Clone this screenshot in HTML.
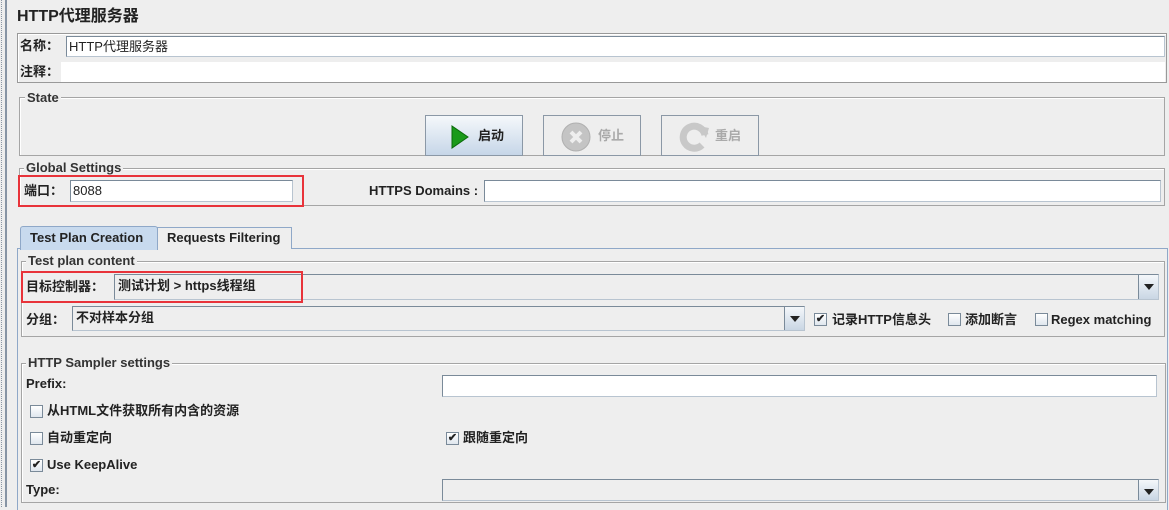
<!DOCTYPE html>
<html><head><meta charset="utf-8"><style>
*{box-sizing:border-box;margin:0;padding:0}
body{width:1169px;height:507px;background:#eeeeee;position:relative;overflow:hidden;font-family:"Liberation Sans","Noto Sans CJK SC",sans-serif;font-size:13px;color:#222;font-weight:bold}
.a{position:absolute}
.in{position:absolute;background:#fff;border:1px solid #7a8a99;border-right-color:#b8c4d0;border-bottom-color:#b8c4d0}
.fs{position:absolute;border:1px solid #a5a5a5;box-shadow:1px 1px 0 #fff inset}
.lg{position:absolute;background:#eeeeee;padding:0 2px;line-height:14px;font-size:13px;color:#333}
.t{position:absolute;line-height:16px;white-space:nowrap}
.btn{position:absolute;height:41px;border:1px solid #8b98a6;background:#eee}
.cb{position:absolute;width:13px;height:13px;border:1px solid #7a8a99;background:linear-gradient(#fff,#dfe6ee);font-size:11px;line-height:11px;text-align:center;color:#222}
.arr{position:absolute;width:20px;border-left:1px solid #7a8a99;background:linear-gradient(#f4f7fa,#c9d6e4)}
.arr:after{content:"";position:absolute;left:5px;top:9px;border-left:5px solid transparent;border-right:5px solid transparent;border-top:6px solid #222}
</style></head><body>
<div class="a" style="left:1px;top:0;width:1px;height:507px;border-left:1px dotted #8a96a4"></div>
<div class="a" style="left:5px;top:0;width:2px;height:507px;background:#8794a4"></div>

<div class="t" style="left:17px;top:7px;font-size:16px;line-height:20px">HTTP代理服务器</div>
<div class="fs" style="left:17px;top:33px;width:1150px;height:50px;border-color:#999"></div>
<div class="t" style="left:20px;top:38px">名称：</div>
<div class="in" style="left:66px;top:36px;width:1099px;height:21px;font-weight:normal;padding-left:2px;line-height:19px">HTTP代理服务器</div>
<div class="t" style="left:20px;top:64px">注释：</div>
<div class="a" style="left:61px;top:62px;width:1104px;height:20px;background:#fff"></div>

<div class="fs" style="left:19px;top:97px;width:1146px;height:59px"></div>
<div class="lg" style="left:25px;top:91px">State</div>
<div class="btn" style="left:425px;top:115px;width:98px;background:linear-gradient(#f5f8fb,#c6d6e8)">
<svg class="a" style="left:25px;top:9px" width="18" height="24"><path d="M1 1L17 12L1 23Z" fill="#1a9a1a" stroke="#0a6a0a"/></svg>
<div class="t" style="left:52px;top:12px">启动</div></div>
<div class="btn" style="left:543px;top:115px;width:98px">
<svg class="a" style="left:17px;top:6px" width="30" height="30"><circle cx="15" cy="15" r="14" fill="#c4c4c4" stroke="#b0b0b0"/><path d="M10 10L20 20M20 10L10 20" stroke="#eee" stroke-width="4"/></svg>
<div class="t" style="left:54px;top:12px;color:#aaa">停止</div></div>
<div class="btn" style="left:661px;top:115px;width:98px">
<svg class="a" style="left:17px;top:6px" width="30" height="30"><path d="M26 13A11 11 0 1 0 23 23" fill="none" stroke="#c8c8c8" stroke-width="7"/><path d="M20 4L30 6L27 16Z" fill="#c8c8c8"/></svg>
<div class="t" style="left:53px;top:12px;color:#aaa">重启</div></div>

<div class="fs" style="left:19px;top:168px;width:1146px;height:38px"></div>
<div class="lg" style="left:24px;top:161px">Global Settings</div>
<div class="t" style="left:24px;top:183px">端口：</div>
<div class="in" style="left:70px;top:180px;width:223px;height:22px;font-weight:normal;padding-left:2px;line-height:20px">8088</div>
<div class="a" style="left:18px;top:175px;width:286px;height:32px;border:2px solid #e8333a"></div>
<div class="t" style="left:369px;top:183px">HTTPS Domains :</div>
<div class="in" style="left:484px;top:180px;width:677px;height:22px"></div>

<div class="a" style="left:17px;top:248px;width:1151px;height:262px;border:1px solid #8fa8c8;border-bottom:none"></div>
<div class="a" style="left:20px;top:226px;width:138px;height:24px;background:#c8daee;border:1px solid #8fa8c8;border-bottom:none;border-radius:3px 3px 0 0"></div>
<div class="t" style="left:30px;top:230px">Test Plan Creation</div>
<div class="a" style="left:157px;top:227px;width:135px;height:22px;background:#eee;border:1px solid #8fa8c8;border-bottom:none"></div>
<div class="t" style="left:167px;top:230px">Requests Filtering</div>

<div class="fs" style="left:21px;top:261px;width:1144px;height:76px"></div>
<div class="lg" style="left:26px;top:254px">Test plan content</div>
<div class="t" style="left:26px;top:279px">目标控制器：</div>
<div class="in" style="left:114px;top:274px;width:1045px;height:26px;background:#eee;line-height:22px;padding-left:3px">测试计划 &gt; https线程组<div class="arr" style="right:0;top:0;height:24px"></div></div>
<div class="a" style="left:21px;top:271px;width:282px;height:32px;border:2px solid #e8333a"></div>
<div class="t" style="left:26px;top:312px">分组：</div>
<div class="in" style="left:72px;top:306px;width:733px;height:25px;background:#eee;line-height:22px;padding-left:3px">不对样本分组<div class="arr" style="right:0;top:0;height:23px"></div></div>
<div class="cb" style="left:814px;top:313px">✔</div><div class="t" style="left:832px;top:312px">记录HTTP信息头</div>
<div class="cb" style="left:948px;top:313px"></div><div class="t" style="left:965px;top:312px">添加断言</div>
<div class="cb" style="left:1035px;top:313px"></div><div class="t" style="left:1051px;top:312px">Regex matching</div>

<div class="fs" style="left:21px;top:363px;width:1145px;height:140px"></div>
<div class="lg" style="left:26px;top:356px">HTTP Sampler settings</div>
<div class="t" style="left:26px;top:376px">Prefix:</div>
<div class="in" style="left:442px;top:375px;width:715px;height:22px"></div>
<div class="cb" style="left:30px;top:405px"></div><div class="t" style="left:47px;top:403px">从HTML文件获取所有内含的资源</div>
<div class="cb" style="left:30px;top:432px"></div><div class="t" style="left:47px;top:430px">自动重定向</div>
<div class="cb" style="left:446px;top:432px">✔</div><div class="t" style="left:463px;top:430px">跟随重定向</div>
<div class="cb" style="left:30px;top:459px">✔</div><div class="t" style="left:47px;top:457px">Use KeepAlive</div>
<div class="t" style="left:26px;top:482px">Type:</div>
<div class="in" style="left:442px;top:479px;width:717px;height:22px;background:#eee"><div class="arr" style="right:0;top:0;height:20px"></div></div>
</body></html>
